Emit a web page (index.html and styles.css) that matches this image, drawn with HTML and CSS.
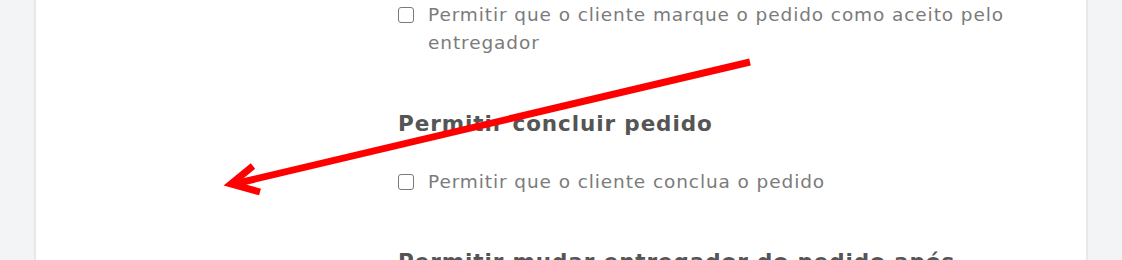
FILE: index.html
```html
<!DOCTYPE html>
<html lang="pt">
<head>
<meta charset="utf-8">
<link rel="stylesheet" href="styles.css">
</head>
<body>
<div class="page">
  <div class="card">
    <div class="content">
      <label class="option">
        <span class="box"></span>
        <span class="label">Permitir que o cliente marque o pedido como aceito pelo<br>entregador</span>
      </label>
      <h3 class="heading h-concluir">Permitir concluir pedido</h3>
      <label class="option">
        <span class="box"></span>
        <span class="label">Permitir que o cliente conclua o pedido</span>
      </label>
      <h3 class="heading h-mudar">Permitir mudar entregador do pedido após</h3>
    </div>
  </div>
</div>
<svg class="arrow" width="1122" height="260" viewBox="0 0 1122 260">
  <g stroke="#ff0000" stroke-width="7" fill="none" stroke-linecap="butt" stroke-linejoin="miter">
    <line x1="750" y1="62" x2="234" y2="184"/>
    <polyline points="253,166 231,184 260,192"/>
  </g>
</svg>
</body>
</html>
```
FILE: styles.css
```css
html, body {
  margin: 0;
  padding: 0;
}
body {
  background: #f3f4f6;
  width: 1122px;
  height: 260px;
  overflow: hidden;
  position: relative;
  font-family: "DejaVu Sans", "Liberation Sans", sans-serif;
}
.page {
  padding: 0 34px;
  height: 260px;
}
.card {
  background: #ffffff;
  border-left: 2px solid #e7e8eb;
  border-right: 2px solid #e7e8eb;
  height: 260px;
}
.content {
  padding: 1px 0 0 362px;
  display: flex;
  flex-direction: column;
  align-items: flex-start;
}
.option {
  display: flex;
  align-items: flex-start;
  gap: 14px;
}
.box {
  width: 14px;
  height: 14px;
  border: 1.5px solid #7a7a7a;
  border-radius: 3px;
  margin-top: 6px;
  flex: none;
}
.label {
  font-size: 18.5px;
  line-height: 28px;
  letter-spacing: 0.9px;
  color: #7b7b7b;
}
.heading {
  margin: 0;
  font-size: 21.5px;
  line-height: 30px;
  letter-spacing: 0.9px;
  font-weight: 700;
  color: #555555;
}
.h-concluir {
  margin-top: 52px;
  margin-bottom: 29px;
}
.h-mudar {
  margin-top: 51px;
}
.arrow {
  position: absolute;
  left: 0;
  top: 0;
}
```
